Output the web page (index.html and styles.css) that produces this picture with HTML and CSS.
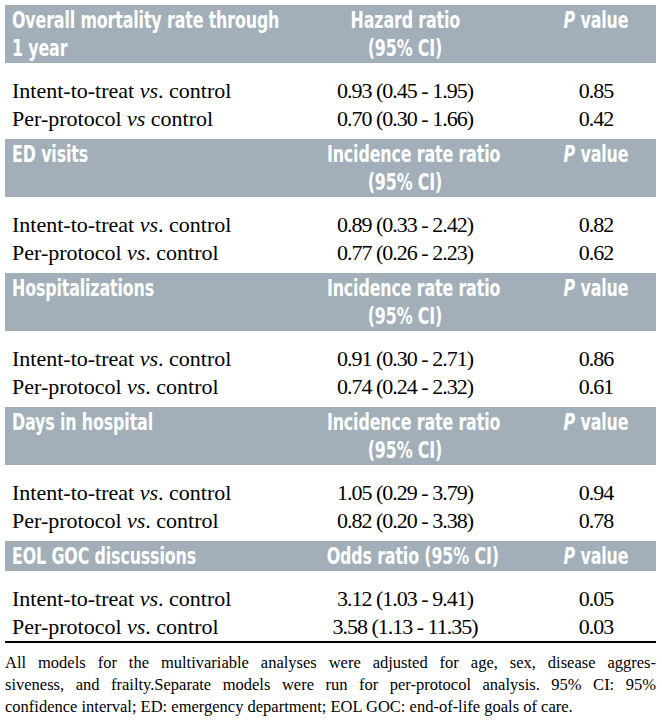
FILE: index.html
```html
<!DOCTYPE html>
<html>
<head>
<meta charset="utf-8">
<link rel="stylesheet" href="styles.css">
</head>
<body>
<div class="table">
  <section class="sec">
    <div class="band">
      <div class="c1"><span class="h">Overall mortality rate through</span><br><span class="h">1 year</span></div>
      <div class="c2"><span class="h">Hazard ratio</span><br><span class="h">(95% CI)</span></div>
      <div class="c3"><span class="h"><i>P</i> value</span></div>
    </div>
    <div class="rows">
      <div class="row"><div class="c1">Intent-to-treat <i>vs</i>. control</div><div class="c2">0.93 (0.45 - 1.95)</div><div class="c3">0.85</div></div>
      <div class="row"><div class="c1">Per-protocol <i>vs</i> control</div><div class="c2">0.70 (0.30 - 1.66)</div><div class="c3">0.42</div></div>
    </div>
  </section>
  <section class="sec">
    <div class="band">
      <div class="c1"><span class="h">ED visits</span></div>
      <div class="c2"><span class="h">Incidence rate ratio</span><br><span class="h">(95% CI)</span></div>
      <div class="c3"><span class="h"><i>P</i> value</span></div>
    </div>
    <div class="rows">
      <div class="row"><div class="c1">Intent-to-treat <i>vs</i>. control</div><div class="c2">0.89 (0.33 - 2.42)</div><div class="c3">0.82</div></div>
      <div class="row"><div class="c1">Per-protocol <i>vs</i>. control</div><div class="c2">0.77 (0.26 - 2.23)</div><div class="c3">0.62</div></div>
    </div>
  </section>
  <section class="sec">
    <div class="band">
      <div class="c1"><span class="h">Hospitalizations</span></div>
      <div class="c2"><span class="h">Incidence rate ratio</span><br><span class="h">(95% CI)</span></div>
      <div class="c3"><span class="h"><i>P</i> value</span></div>
    </div>
    <div class="rows">
      <div class="row"><div class="c1">Intent-to-treat <i>vs</i>. control</div><div class="c2">0.91 (0.30 - 2.71)</div><div class="c3">0.86</div></div>
      <div class="row"><div class="c1">Per-protocol <i>vs</i>. control</div><div class="c2">0.74 (0.24 - 2.32)</div><div class="c3">0.61</div></div>
    </div>
  </section>
  <section class="sec">
    <div class="band">
      <div class="c1"><span class="h">Days in hospital</span></div>
      <div class="c2"><span class="h">Incidence rate ratio</span><br><span class="h">(95% CI)</span></div>
      <div class="c3"><span class="h"><i>P</i> value</span></div>
    </div>
    <div class="rows">
      <div class="row"><div class="c1">Intent-to-treat <i>vs</i>. control</div><div class="c2">1.05 (0.29 - 3.79)</div><div class="c3">0.94</div></div>
      <div class="row"><div class="c1">Per-protocol <i>vs</i>. control</div><div class="c2">0.82 (0.20 - 3.38)</div><div class="c3">0.78</div></div>
    </div>
  </section>
  <section class="sec last">
    <div class="band">
      <div class="c1"><span class="h">EOL GOC discussions</span></div>
      <div class="c2"><span class="h">Odds ratio (95% CI)</span></div>
      <div class="c3"><span class="h"><i>P</i> value</span></div>
    </div>
    <div class="rows">
      <div class="row"><div class="c1">Intent-to-treat <i>vs</i>. control</div><div class="c2">3.12 (1.03 - 9.41)</div><div class="c3">0.05</div></div>
      <div class="row"><div class="c1">Per-protocol <i>vs</i>. control</div><div class="c2">3.58 (1.13 - 11.35)</div><div class="c3">0.03</div></div>
    </div>
  </section>
  <div class="note">
    <span class="ln">All models for the multivariable analyses were adjusted for age, sex, disease aggres-</span>
    <span class="ln">siveness, and frailty.Separate models were run for per-protocol analysis. 95% CI: 95%</span>
    <span class="ln end">confidence interval; ED: emergency department; EOL GOC: end-of-life goals of care.</span>
  </div>
</div>
</body>
</html>
```
FILE: styles.css
```css
html, body {
  margin: 0;
  padding: 0;
  background: #ffffff;
}
.table {
  width: 651px;
  padding: 5px 0 0 5px;
}
.band, .row {
  display: grid;
  grid-template-columns: 283px 234px 134px;
}
.band {
  background: #a3afb8;
  color: #ffffff;
  font-family: "DejaVu Sans", sans-serif;
  font-weight: bold;
  font-size: 23px;
  line-height: 28px;
  padding: 1px 0;
}
.band > div {
  white-space: nowrap;
  min-width: 0;
}
.h {
  display: inline-block;
  transform: scaleX(0.69);
  transform-origin: center;
  letter-spacing: -0.2px;
}
.band .c1 {
  padding-left: 7px;
}
.band .c1 .h {
  transform-origin: left center;
}
.c2 {
  text-align: center;
}
.c3 {
  text-align: center;
  padding-left: 14px;
}
.rows {
  padding: 14px 0 6px;
  font-family: "Liberation Serif", serif;
  font-size: 22px;
  line-height: 28px;
  color: #000000;
}
.row .c1 {
  padding-left: 7px;
}
.row .c2, .row .c3 {
  letter-spacing: -1px;
}
.last .rows {
  padding-bottom: 0;
  border-bottom: 2px solid #000000;
}
.note {
  margin-top: 9px;
  font-family: "Liberation Serif", serif;
  font-size: 16.5px;
  line-height: 22px;
  color: #000000;
}
.ln {
  display: block;
  text-align: justify;
  text-align-last: justify;
}
.ln.end {
  text-align-last: left;
}
```
